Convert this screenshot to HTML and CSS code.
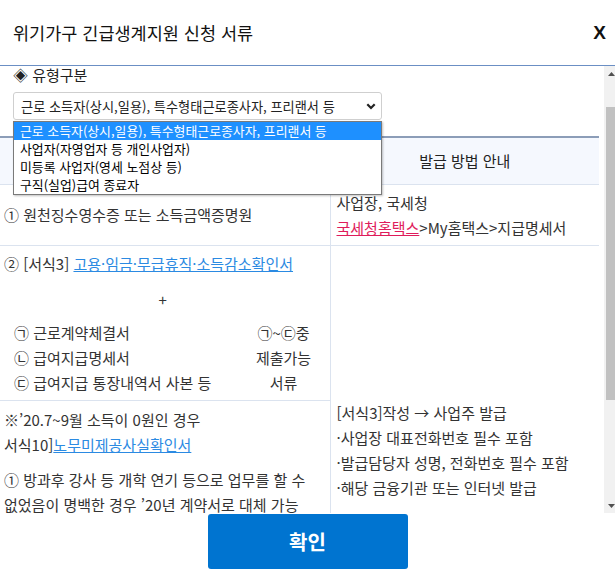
FILE: index.html
```html
<!DOCTYPE html>
<html lang="ko">
<head>
<meta charset="utf-8">
<title>위기가구 긴급생계지원 신청 서류</title>
<link rel="stylesheet" href="styles.css">
</head>
<body>
<div class="modal">
  <header class="modal-header">
    <h1 class="modal-title">위기가구 긴급생계지원 신청 서류</h1>
    <button class="modal-close" type="button">X</button>
  </header>
  <div class="modal-main">
    <div class="modal-body">
      <div class="type-section">
        <p class="type-label">◈ 유형구분</p>
        <div class="select-wrap">
          <div class="select-box">
            <span>근로 소득자(상시,일용), 특수형태근로종사자, 프리랜서 등</span>
            <svg class="chevron" width="10" height="7" viewBox="0 0 10 7"><path d="M1.3 1.3 L5 5 L8.7 1.3" fill="none" stroke="#222" stroke-width="2.2"/></svg>
          </div>
          <ul class="select-popup">
            <li class="selected">근로 소득자(상시,일용), 특수형태근로종사자, 프리랜서 등</li>
            <li>사업자(자영업자 등 개인사업자)</li>
            <li>미등록 사업자(영세 노점상 등)</li>
            <li>구직(실업)급여 종료자</li>
          </ul>
        </div>
      </div>
      <table class="doc-table">
        <colgroup><col class="col-docs"><col class="col-guide"></colgroup>
        <thead>
          <tr><th>제출 서류</th><th>발급 방법 안내</th></tr>
        </thead>
        <tbody>
          <tr class="row-1">
            <td class="docs">① 원천징수영수증 또는 소득금액증명원</td>
            <td class="guide">
              <p>사업장, 국세청</p>
              <p><a class="link-red" href="#">국세청홈택스</a>&gt;My홈택스&gt;지급명세서</p>
            </td>
          </tr>
          <tr class="row-2">
            <td class="docs">
              <p>② [서식3] <a class="link-blue" href="#">고용·임금·무급휴직·소득감소확인서</a></p>
              <p class="plus">+</p>
              <div class="sub-docs">
                <ul class="sub-list">
                  <li>㉠ 근로계약체결서</li>
                  <li>㉡ 급여지급명세서</li>
                  <li>㉢ 급여지급 통장내역서 사본 등</li>
                </ul>
                <ul class="sub-note">
                  <li>㉠~㉢중</li>
                  <li>제출가능</li>
                  <li>서류</li>
                </ul>
              </div>
            </td>
            <td class="guide guide-span" rowspan="2">
              <p>[서식3]작성 → 사업주 발급</p>
              <p>·사업장 대표전화번호 필수 포함</p>
              <p>·발급담당자 성명, 전화번호 필수 포함</p>
              <p>·해당 금융기관 또는 인터넷 발급</p>
            </td>
          </tr>
          <tr class="row-3">
            <td class="docs">
              <p>※’20.7~9월 소득이 0원인 경우</p>
              <p>서식10]<a class="link-blue" href="#">노무미제공사실확인서</a></p>
              <p class="note">① 방과후 강사 등 개학 연기 등으로 업무를 할 수 없었음이 명백한 경우 ’20년 계약서로 대체 가능</p>
            </td>
          </tr>
        </tbody>
      </table>
    </div>
    <div class="scrollbar" aria-hidden="true">
      <div class="sb-btn"><svg width="7" height="4" viewBox="0 0 7 4"><path d="M0 4L3.5 0L7 4z" fill="#505050"/></svg></div>
      <div class="sb-track"><div class="sb-thumb"></div></div>
      <div class="sb-btn"><svg width="7" height="4" viewBox="0 0 7 4"><path d="M0 0L3.5 4L7 0z" fill="#505050"/></svg></div>
    </div>
  </div>
  <footer class="modal-footer">
    <button class="btn-confirm" type="button">확인</button>
  </footer>
</div>
<script src="script.js"></script>
</body>
</html>
```
FILE: styles.css
```css
* { box-sizing: border-box; }
html, body { margin: 0; padding: 0; overflow: hidden; background: #fff; }
body {
  width: 615px;
  height: 577px;
  font-family: "Noto Sans CJK KR", "Noto Sans", sans-serif;
  color: #333;
  font-size: 15px;
}
p { margin: 0; }
ul { margin: 0; padding: 0; list-style: none; }

.modal { width: 619px; }

.modal-header {
  height: 66px;
  display: flex;
  align-items: center;
  justify-content: space-between;
  padding: 0 13px;
  border-bottom: 1px solid #6b8fc4;
}
.modal-title {
  margin: 0;
  font-size: 17.5px;
  font-weight: 400;
  color: #111;
  line-height: 1;
}
.modal-close {
  border: 0;
  background: none;
  padding: 0;
  font-family: "Liberation Sans", Arial, sans-serif;
  font-size: 19px;
  font-weight: bold;
  color: #111;
}

.modal-main {
  display: flex;
  height: 447px;
}
.modal-body {
  width: 604px;
  height: 447px;
  overflow: hidden;
}

.scrollbar {
  width: 15px;
  display: flex;
  flex-direction: column;
  background: #f1f1f1;
}
.sb-btn {
  height: 15px;
  display: flex;
  align-items: center;
  justify-content: center;
}
.sb-btn svg { display: block; }
.sb-track { flex: 1; padding-top: 26px; }
.sb-thumb { height: 293px; margin: 0 2px; background: #c1c1c1; }

.type-section { padding: 36px 0 0 13px; }
.type-label { line-height: 25px; font-size: 15px; color: #222; }
.select-wrap { position: relative; width: 369px; margin-top: 5px; }
.select-box {
  height: 28px;
  display: flex;
  align-items: center;
  justify-content: space-between;
  padding: 0 5px 0 7px;
  border: 1px solid #cfcfcf;
  border-radius: 3px;
  background: #fff;
  font-size: 13.2px;
  color: #222;
}
.chevron { display: block; }
.select-popup {
  position: absolute;
  left: 0;
  top: 29px;
  width: 369px;
  border: 1px solid #7a7a7a;
  background: #fff;
  box-shadow: 1px 1px 2px rgba(0,0,0,0.25);
  z-index: 5;
  font-size: 12.9px;
  color: #000;
}
.select-popup li { height: 18px; line-height: 18px; padding-left: 6px; white-space: nowrap; }
.select-popup li.selected { background: #1e90ff; color: #fff; }

.doc-table {
  margin-top: 16px;
  width: 599px;
  table-layout: fixed;
  border-collapse: collapse;
}
.col-docs { width: 330px; }
.col-guide { width: 269px; }
.doc-table th {
  height: 47px;
  border-top: 2px solid #8c9db8;
  border-bottom: 1px solid #dbe3ef;
  background: #f5f8fe;
  font-weight: 400;
  font-size: 15px;
  color: #222;
  text-align: center;
}
.doc-table th:first-child { border-right: 1px solid #dbe3ef; }
.doc-table td {
  border-bottom: 1px solid #dbe3ef;
  line-height: 25px;
  vertical-align: middle;
  padding: 5px 6px;
}
.doc-table td.docs { border-right: 1px solid #dbe3ef; padding: 5px 8px 5px 4px; }
.row-1 td { height: 61px; }
.row-2 td.docs { vertical-align: top; }
.row-3 td.docs { vertical-align: top; height: 254px; padding-top: 6px; }
.guide-span { vertical-align: middle; }

.plus { text-align: center; margin-top: 11px; }
.sub-docs {
  display: grid;
  grid-template-columns: 1fr 76px;
  margin: 8px 0 0 10px;
}
.sub-note { text-align: center; }
.note { margin-top: 10px; }

.link-red { color: #df1c5b; text-decoration: underline; }
.link-blue { color: #2b8ae2; text-decoration: underline; }

.modal-footer {
  display: flex;
  justify-content: center;
  padding: 1px 4px 0 0;
}
.btn-confirm {
  width: 200px;
  height: 55px;
  border: 0;
  border-radius: 3px;
  background: #0074d0;
  color: #fff;
  font-family: "Noto Sans CJK KR", sans-serif;
  font-size: 20px;
  font-weight: bold;
}
```
FILE: script.js
```js
document.querySelector('.modal-body').scrollTop = 40;
```
